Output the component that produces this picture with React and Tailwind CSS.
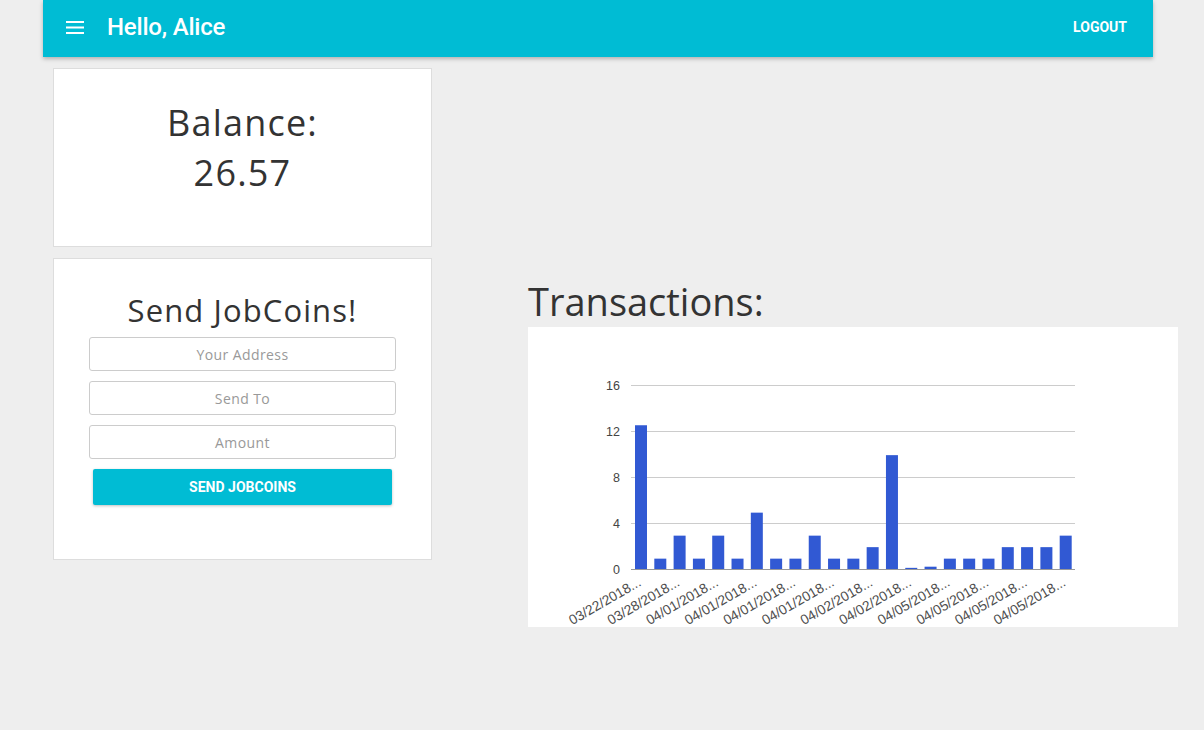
import { useState } from 'react'

const BARS = [12.5, 0.9, 2.9, 0.9, 2.9, 0.9, 4.9, 0.9, 0.9, 2.9, 0.9, 0.9, 1.9, 9.9, 0.1, 0.2, 0.9, 0.9, 0.9, 1.9, 1.9, 1.9, 2.9]
const LABELS = ['03/22/2018...', '03/28/2018...', '04/01/2018...', '04/01/2018...', '04/01/2018...', '04/01/2018...', '04/02/2018...', '04/02/2018...', '04/05/2018...', '04/05/2018...', '04/05/2018...', '04/05/2018...']
const TICKS = [16, 12, 8, 4, 0]

const heading = { fontFamily: '"Open Sans", "DejaVu Sans", sans-serif' }

function TransactionsChart() {
  const left = 103
  const right = 547
  const base = 242
  const unit = 11.5
  const step = (right - left) / BARS.length

  return (
    <svg width="650" height="300" className="block" style={{ fontFamily: '"Liberation Sans", Arial, sans-serif' }}>
      {TICKS.map((t) => (
        <g key={t}>
          <line x1={left} x2={right} y1={base - t * unit + 0.5} y2={base - t * unit + 0.5} stroke={t === 0 ? '#999' : '#ccc'} strokeWidth="1" />
          <text x={92} y={base - t * unit + 4.5} textAnchor="end" fontSize="12.5" fill="#444">{t}</text>
        </g>
      ))}
      {BARS.map((v, i) => (
        <rect key={i} x={left + 4 + i * step} y={base - v * unit} width="12" height={v * unit} fill="#3159d3" />
      ))}
      {LABELS.map((l, i) => {
        const cx = left + 10 + i * 2 * step
        return (
          <text key={i} x={cx + 1} y={base + 16} textAnchor="end" fontSize="13.8" fill="#4d4d4d" transform={`rotate(-30 ${cx + 1} ${base + 16})`}>
            {l}
          </text>
        )
      })}
    </svg>
  )
}

function Input({ placeholder }) {
  const [value, setValue] = useState('')
  return (
    <input
      value={value}
      onChange={(e) => setValue(e.target.value)}
      placeholder={placeholder}
      style={heading}
      className="h-[34px] w-full rounded-[3px] border border-[#cccccc] bg-white text-center text-[14px] tracking-[0.4px] text-[#555] placeholder:text-[#999] focus:outline-none"
    />
  )
}

export default function App() {
  return (
    <div className="min-h-[730px] bg-[#eeeeee]" style={{ fontFamily: 'Roboto, "Liberation Sans", sans-serif' }}>
      {/* Toolbar */}
      <header className="ml-[43px] flex h-[57px] w-[1110px] items-center bg-[#00bcd4] px-[23px] pb-[3px] text-white shadow-[0_2px_4px_rgba(0,0,0,0.25)]">
        <svg width="18" height="13" viewBox="0 0 18 13" className="shrink-0">
          <rect y="0" width="18" height="2" fill="white" />
          <rect y="5.5" width="18" height="2" fill="white" />
          <rect y="11" width="18" height="2" fill="white" />
        </svg>
        <h1 className="ml-[23px] text-[24px] font-medium tracking-[-0.2px]">Hello, Alice</h1>
        <button className="ml-auto mr-[3px] text-[14px] font-bold uppercase">Logout</button>
      </header>

      <div className="flex">
        {/* Left column */}
        <div className="ml-[53px] mt-[11px] flex w-[379px] flex-col gap-[11px]">
          <div className="flex h-[179px] flex-col items-center border border-[#dddddd] bg-white pt-[29px] text-[36px] leading-[50px] tracking-[1.2px] text-[#333]" style={heading}>
            <span>Balance:</span>
            <span>26.57</span>
          </div>

          <div className="flex h-[302px] flex-col items-center border border-[#dddddd] bg-white px-[35px] pt-[31px]">
            <h2 className="text-[31px] leading-[40px] tracking-[1.1px] text-[#333]" style={heading}>Send JobCoins!</h2>
            <form className="mt-[7px] flex w-full flex-col gap-[10px]" onSubmit={(e) => e.preventDefault()}>
              <Input placeholder="Your Address" />
              <Input placeholder="Send To" />
              <Input placeholder="Amount" />
              <button type="submit" className="mx-[4px] h-[36px] rounded-[2px] bg-[#00bcd4] text-[14px] font-bold uppercase text-white shadow-[0_1px_3px_rgba(0,0,0,0.25)]">
                Send JobCoins
              </button>
            </form>
          </div>
        </div>

        {/* Right column */}
        <div className="ml-[96px] mt-[218px]">
          <h2 className="text-[38px] leading-[52px] text-[#333]" style={heading}>Transactions:</h2>
          <div className="w-[650px] bg-white">
            <TransactionsChart />
          </div>
        </div>
      </div>
    </div>
  )
}
